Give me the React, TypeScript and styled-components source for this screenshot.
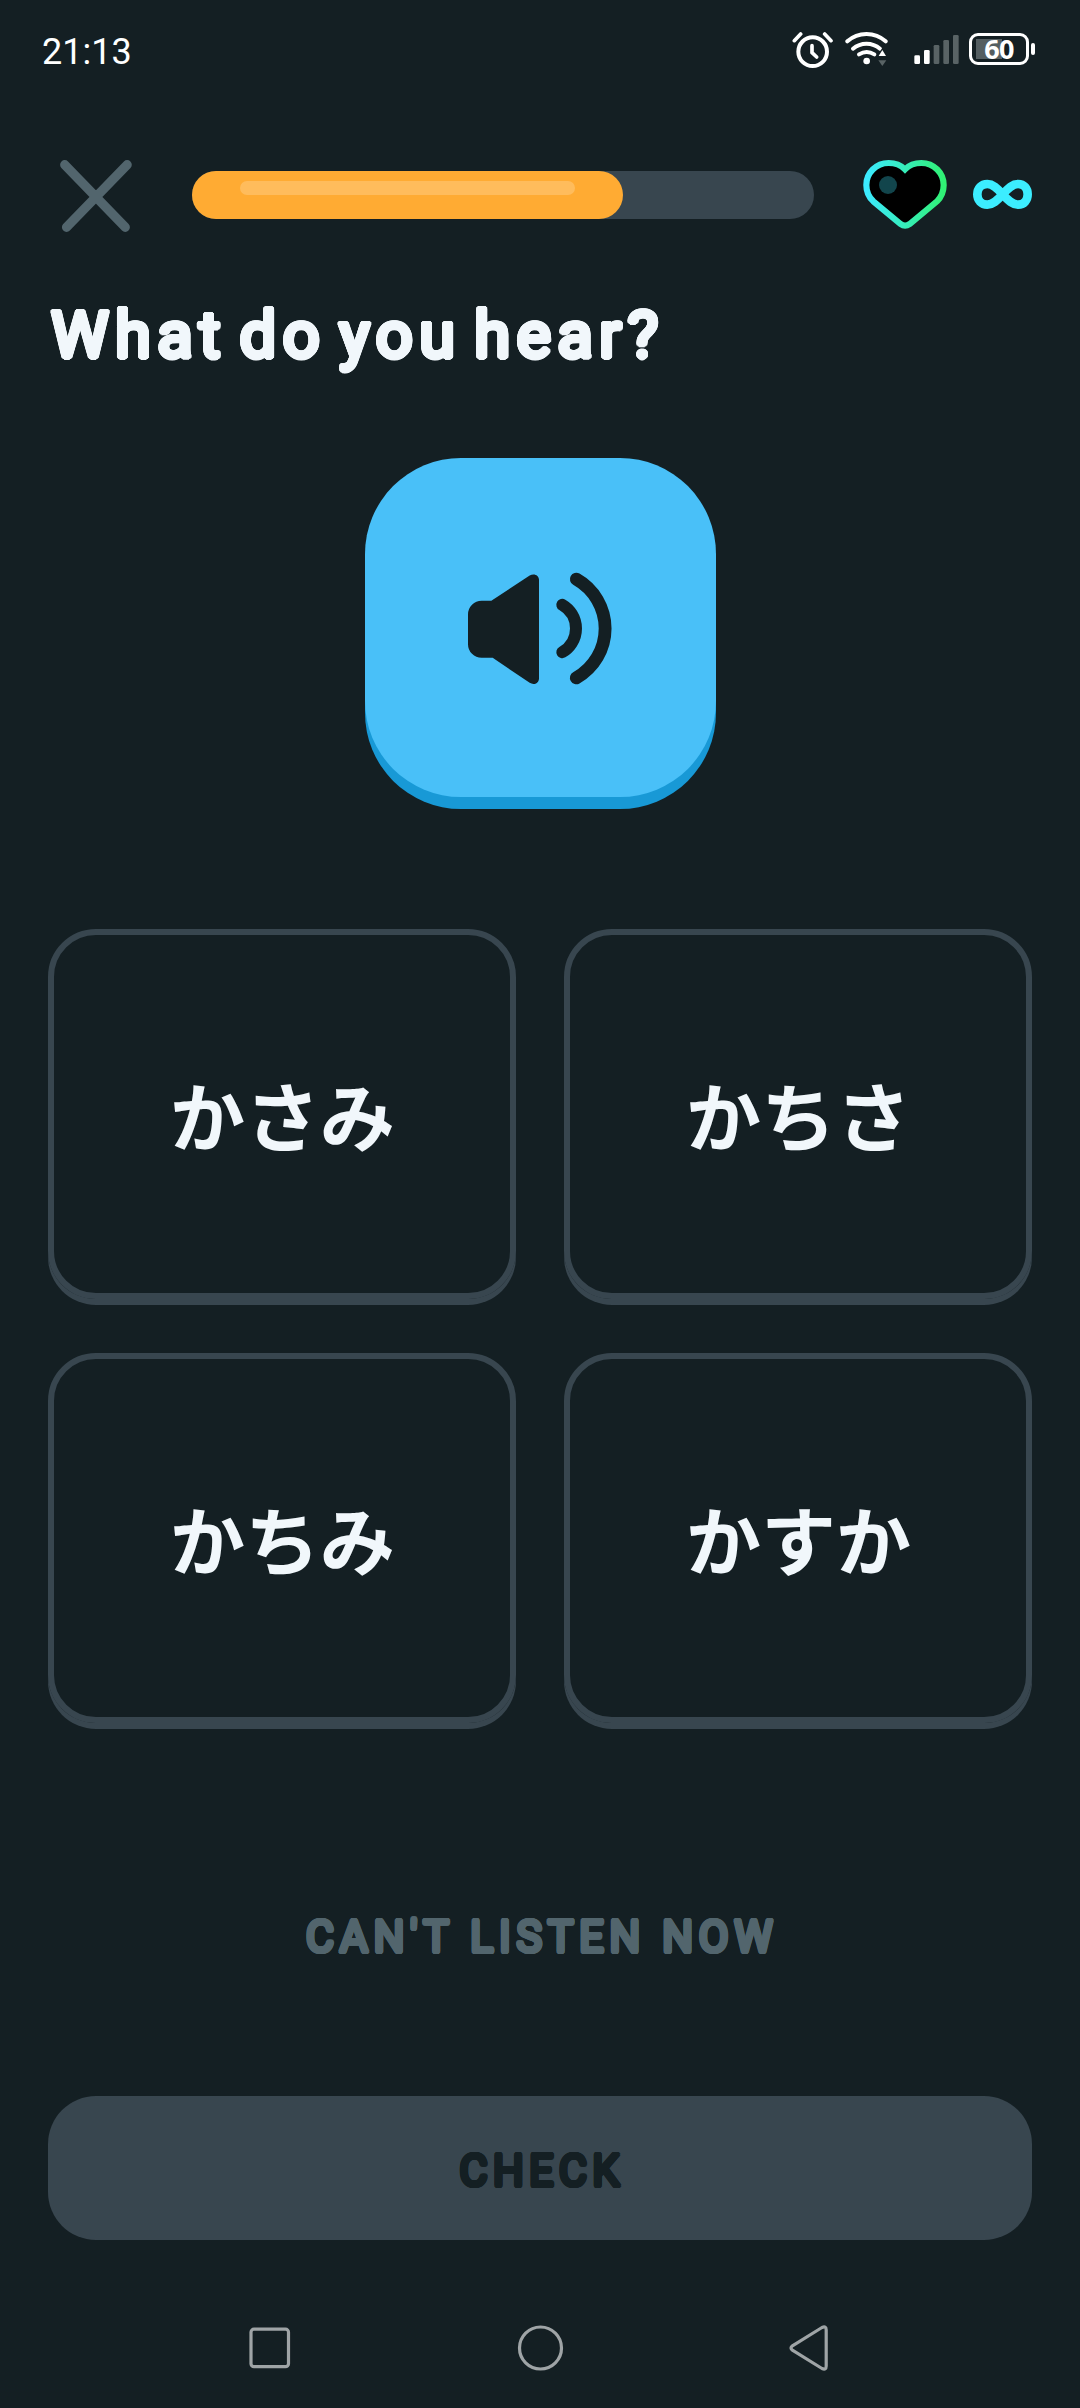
import React from "react";
import styled, { createGlobalStyle } from "styled-components";

const c = {
  bg: "#141f23",
  line: "#38464f",
  muted: "#52656d",
  text: "#f1f7fb",
  blue: "#49c0f8",
  blueEdge: "#1899d6",
  orange: "#ffab33",
};

/* A ring of offset copies thickens the letters and rounds their ends. */
const rounded = (r: number, color: string) =>
  Array.from({ length: 20 }, (_, i) => {
    const a = (i / 20) * Math.PI * 2;
    return `${(Math.cos(a) * r).toFixed(2)}px ${(Math.sin(a) * r).toFixed(2)}px 0 ${color}`;
  }).join(", ");

const GlobalStyle = createGlobalStyle`
  * { box-sizing: border-box; }
  body { margin: 0; background: ${c.bg}; }
  button { font: inherit; border: 0; padding: 0; background: none; color: inherit; }
  svg { display: block; flex: none; }
`;

const Screen = styled.main`
  width: 1080px;
  height: 2408px;
  display: flex;
  flex-direction: column;
  overflow: hidden;
  background: ${c.bg};
  color: ${c.text};
  font-family: Roboto, "Noto Sans CJK JP", sans-serif;
`;

const StatusBar = styled.header`
  height: 100px;
  padding: 0 45px 0 42px;
  display: flex;
  align-items: center;
  justify-content: space-between;
`;

const Clock = styled.time`
  font-size: 36px;
  line-height: 42px;
  color: #fff;
  padding-top: 4px;
`;

const StatusIcons = styled.div`
  display: flex;
  align-items: center;
`;

const SignalSlot = styled.div`
  padding: 0 10px 0 26px;
`;

const WifiSlot = styled.div`
  padding-left: 12px;
`;

const Battery = styled.div`
  display: flex;
  align-items: center;
  gap: 2px;
  height: 38px;
  padding-bottom: 2px;
`;

const BatteryBody = styled.div`
  width: 60px;
  height: 32px;
  border: 3px solid #fff;
  border-radius: 9px;
  display: flex;
  align-items: center;
  justify-content: center;
  background: linear-gradient(#545e61, #545e61) 4px 3px / 26px 20px no-repeat;
  font: 700 27px/26px "Noto Sans", sans-serif;
  letter-spacing: -0.8px;
  color: #fff;
`;

const BatteryTip = styled.div`
  width: 4px;
  height: 12px;
  border-radius: 2px;
  background: #fff;
`;

const LessonBar = styled.div`
  height: 190px;
  padding: 58px 47px 58px 59px;
  display: flex;
  align-items: center;
`;

const Track = styled.div`
  width: 622px;
  height: 48px;
  margin-left: 59px;
  border-radius: 24px;
  background: ${c.line};
`;

const Fill = styled.div<{ $width: number }>`
  width: ${(p) => p.$width}px;
  height: 48px;
  padding: 10px 48px 0;
  border-radius: 24px;
  background: ${c.orange};
`;

const Shine = styled.div`
  height: 14px;
  border-radius: 7px;
  background: #ffbc5c;
`;

const Lives = styled.div`
  margin: 0 0 2px 48px;
  display: flex;
  align-items: center;
  gap: 24px;
`;

const Title = styled.h1`
  margin: 0;
  height: 84px;
  padding-left: 51px;
  font-size: 65px;
  line-height: 91px;
  font-weight: 400;
  letter-spacing: 6.4px;
  word-spacing: -9.6px;
  white-space: nowrap;
  text-shadow: ${rounded(2.5, c.text)};
`;

const SpeakerButton = styled.button`
  width: 351px;
  height: 339px;
  margin: 84px 0 0 365px;
  border-radius: 96px;
  display: flex;
  align-items: center;
  justify-content: center;
  background: ${c.blue};
  box-shadow: 0 12px 0 ${c.blueEdge};
`;

const Choices = styled.div`
  margin: 132px 48px 0;
  display: grid;
  grid-template-columns: 1fr 1fr;
  grid-auto-rows: 370px;
  gap: 54px 48px;
`;

const Choice = styled.button`
  border: 6px solid ${c.line};
  border-radius: 48px;
  box-shadow: 0 6px 0 ${c.line};
  padding-left: 1px;
  display: flex;
  align-items: center;
  justify-content: center;
  font: 700 75px/100px "Noto Sans CJK JP", sans-serif;
  color: ${c.text};
`;

const ActionButton = styled.button`
  height: 144px;
  margin: 0 48px;
  display: flex;
  align-items: center;
  justify-content: center;
  font-size: 43.5px;
  line-height: 60px;
  font-weight: 400;
  white-space: nowrap;
`;

const SkipButton = styled(ActionButton)`
  margin-top: 142px;
  padding: 2px 0 0 4px;
  color: ${c.muted};
  letter-spacing: 5.5px;
  text-shadow: ${rounded(1.9, c.muted)};
`;

const CheckButton = styled(ActionButton)`
  margin-top: 87px;
  padding: 8px 0 0 4px;
  border-radius: 48px;
  background: ${c.line};
  color: ${c.bg};
  letter-spacing: 5.1px;
  text-shadow: ${rounded(1.9, c.bg)};
`;

const NavBar = styled.nav`
  height: 168px;
  padding: 48px 251px 0 248px;
  display: flex;
  justify-content: space-between;
  align-items: flex-start;
`;

const AlarmIcon = () => (
  <svg width="41" height="38" viewBox="36 63 123 114" fill="none" stroke="#fff" strokeWidth="11" strokeLinecap="round" strokeLinejoin="round">
    <circle cx="98" cy="125" r="43" strokeWidth="12" />
    <path d="M96 107V128L110 141" />
    <path d="M43 92L62 72M134 72L153 92" />
  </svg>
);

const WifiIcon = () => (
  <svg width="43" height="38" viewBox="195 63 129 114" fill="none" stroke="#fff" strokeWidth="12" strokeLinecap="round">
    <path d="M202 94A86 86 0 0 1 317 94" />
    <path d="M219 116A62 62 0 0 1 300 116" />
    <path d="M237 133A43 43 0 0 1 283 133" />
    <circle cx="260" cy="153" r="10" fill="#fff" stroke="none" />
    <path d="M307 113L324 143H290Z" fill={c.bg} stroke="none" />
    <path d="M307 120L318 138H296Z" fill="#fff" stroke="none" />
    <path d="M295 151H319L307 168Z" fill="#596365" stroke="none" />
  </svg>
);

const SignalIcon = () => (
  <svg width="45" height="38" viewBox="402 63 135 114">
    {[136, 120, 105, 90, 75].map((y, i) => (
      <rect key={y} x={403 + i * 29} y={y} width="17" height={162 - y} rx="4" fill={i < 2 ? "#fff" : "#596365"} />
    ))}
  </svg>
);

const CloseIcon = () => (
  <svg width="74" height="74" viewBox="59 158 74 74" fill="none" stroke={c.muted} strokeWidth="9.2" strokeLinecap="round">
    <path d="M64.7 164.7L125.3 227.3M127.2 164.7L66.5 227.3" />
  </svg>
);

const HeartIcon = () => (
  <svg width="86" height="72" viewBox="66 54 258 216">
    <defs>
      <linearGradient id="heart" x1="79" y1="0" x2="312" y2="0" gradientUnits="userSpaceOnUse">
        <stop offset="0" stopColor="#3ceaff" />
        <stop offset="1" stopColor="#30f174" />
      </linearGradient>
    </defs>
    <path
      d="M195 88C182 75 164 69 146 69C108 69 79 99 79 135C79 154 86 171 100 184L182 252Q195 262 209 252L291 184C304 171 311 154 311 135C311 99 282 69 244 69C226 69 208 75 195 88Z"
      fill="#000"
      stroke="url(#heart)"
      strokeWidth="18.5"
    />
    <circle cx="144" cy="135" r="27" fill="#12454c" />
  </svg>
);

const InfinityIcon = () => (
  <svg width="61" height="32" viewBox="396 114 183 96" fill="none" stroke="#3cedff" strokeWidth="26">
    <path d="M488 163C470 143 458 132 442 132C424 132 412 145 412 163C412 181 424 194 442 194C458 194 470 183 488 163C506 143 518 132 534 132C552 132 563 145 563 163C563 181 552 194 534 194C518 194 506 183 488 163Z" />
  </svg>
);

const SpeakerIcon = () => (
  <svg width="149" height="120" viewBox="348 382.5 447 360" fill="none" stroke={c.bg} strokeLinecap="round">
    <path
      d="M395 481H424L539 405C552 397 567 404 567 418V713C567 728 552 735 539 727L428 652H395A41 41 0 0 1 354 611V522A41 41 0 0 1 395 481Z"
      fill={c.bg}
      stroke="none"
    />
    <path d="M637 493A82 82 0 0 1 637 635" strokeWidth="36" />
    <path d="M679 416A170 170 0 0 1 679 712" strokeWidth="38.5" />
  </svg>
);

const navStroke = { fill: "none", stroke: "#9fa4a6", strokeWidth: 3.2, strokeLinejoin: "round" as const };

const choices = ["かさみ", "かちさ", "かちみ", "かすか"];

export default function App() {
  return (
    <Screen>
      <GlobalStyle />
      <StatusBar>
        <Clock>21:13</Clock>
        <StatusIcons>
          <AlarmIcon />
          <WifiSlot>
            <WifiIcon />
          </WifiSlot>
          <SignalSlot>
            <SignalIcon />
          </SignalSlot>
          <Battery>
            <BatteryBody>60</BatteryBody>
            <BatteryTip />
          </Battery>
        </StatusIcons>
      </StatusBar>
      <LessonBar>
        <CloseIcon />
        <Track>
          <Fill $width={431}>
            <Shine />
          </Fill>
        </Track>
        <Lives>
          <HeartIcon />
          <InfinityIcon />
        </Lives>
      </LessonBar>
      <Title>What do you hear?</Title>
      <SpeakerButton aria-label="Play audio">
        <SpeakerIcon />
      </SpeakerButton>
      <Choices>
        {choices.map((t) => (
          <Choice key={t}>{t}</Choice>
        ))}
      </Choices>
      <SkipButton>CAN'T LISTEN NOW</SkipButton>
      <CheckButton>CHECK</CheckButton>
      <NavBar>
        <svg width="44" height="120" viewBox="248 2288 44 120" {...navStroke}>
          <rect x="251" y="2329.2" width="37.5" height="37.5" rx="3" />
        </svg>
        <svg width="50" height="120" viewBox="514.5 2288 50 120" {...navStroke}>
          <circle cx="540" cy="2348" r="21" />
        </svg>
        <svg width="42" height="120" viewBox="787 2288 42 120" {...navStroke}>
          <path d="M822 2327.5L792 2346.2Q790 2348 792 2349.8L822 2368.5Q826.2 2370.5 826.2 2366V2330Q826.2 2325.5 822 2327.5Z" />
        </svg>
      </NavBar>
    </Screen>
  );
}
